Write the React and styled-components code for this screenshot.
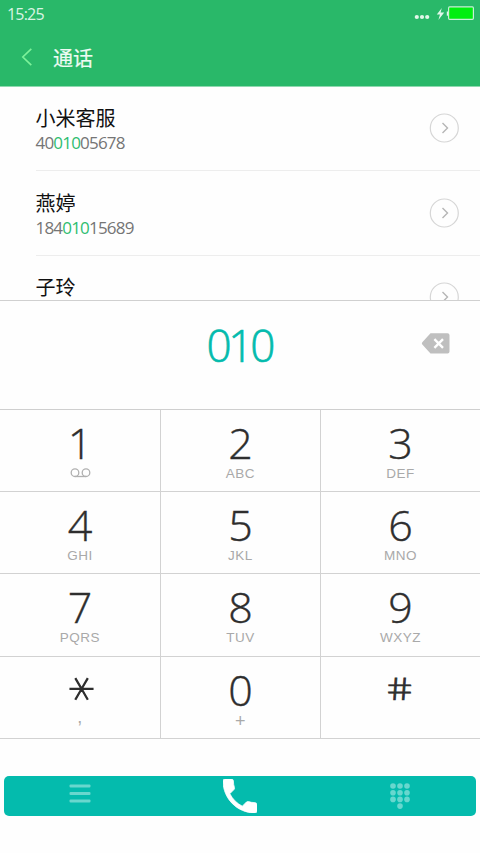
import styled, { createGlobalStyle } from "styled-components";

const GlobalStyle = createGlobalStyle`
  * {
    box-sizing: border-box;
  }
  body {
    margin: 0;
    background: #fff;
    font-family: "Open Sans", "Noto Sans CJK SC", sans-serif;
  }
`;

const Phone = styled.div`
  width: 480px;
  height: 853px;
  display: flex;
  flex-direction: column;
  overflow: hidden;
  background: #fefefe;
`;

const Header = styled.header`
  height: 87px;
  flex: none;
  background: #29b869;
  border-bottom: 1px solid #8fd9b0;
`;

const StatusBar = styled.div`
  height: 28px;
  padding: 0 5px 0 7px;
  display: flex;
  align-items: center;
  justify-content: space-between;
`;

const Clock = styled.span`
  font-size: 16px;
  line-height: 28px;
  letter-spacing: -0.8px;
  color: #d9f4e4;
`;

const TitleBar = styled.div`
  height: 58px;
  padding-left: 21px;
  display: flex;
  align-items: center;
`;

const Title = styled.h1`
  margin: 1px 0 0 21px;
  font: 400 20px/30px "Noto Sans CJK SC", sans-serif;
  -webkit-text-stroke: 0.2px;
  color: #eefbf3;
`;

const ContactList = styled.ul`
  margin: 0;
  padding: 0;
  height: 213px;
  flex: none;
  overflow: hidden;
  list-style: none;
`;

const ContactRow = styled.li`
  height: 84.4px;
  margin-left: 36px;
  padding: 17.4px 21px 0 0;
  display: flex;
  justify-content: space-between;
  border-bottom: 1px solid #ededed;
`;

const Name = styled.div`
  margin-left: -0.5px;
  font: 400 20px/28px "Noto Sans CJK SC", sans-serif;
  color: #111;
`;

const Number = styled.div`
  margin-left: -0.5px;
  font-size: 17px;
  line-height: 22px;
  letter-spacing: -0.8px;
  color: #757575;
`;

const Match = styled.span`
  color: #2fbd70;
`;

const DetailButton = styled.button`
  width: 30px;
  height: 30px;
  margin: 9px 0 0;
  padding: 0;
  border: none;
  background: none;
`;

const Display = styled.div`
  height: 109px;
  flex: none;
  display: grid;
  grid-template-columns: 1fr 1fr 1fr;
  border-top: 1px solid #d0d0d0;
`;

const Typed = styled.div`
  grid-column: 2;
  font-size: 44px;
  font-weight: 300;
  line-height: 60px;
  padding-top: 14px;
  letter-spacing: -3.2px;
  text-indent: -1.5px;
  text-align: center;
  -webkit-text-stroke: 0.7px;
  color: #04bbad;
`;

const Erase = styled.button`
  justify-self: end;
  align-self: start;
  width: 29px;
  height: 21px;
  margin: 32px 30px 0 0;
  padding: 0;
  border: none;
  background: none;
`;

const Keypad = styled.div`
  height: 330px;
  flex: none;
  display: grid;
  grid-template-columns: 161px 160px 159px;
  grid-template-rows: 82px 82px 83px 82px;
  border-top: 1px solid #cfcfcf;
`;

const Key = styled.button`
  display: flex;
  flex-direction: column;
  align-items: center;
  padding: 0;
  border: 0 solid #d2d2d2;
  border-right-width: ${(p) => (p.$last ? 0 : "1px")};
  border-bottom-width: 1px;
  background: none;
`;

const Digit = styled.span`
  height: 54px;
  font: 300 43px/66px "Open Sans", sans-serif;
  -webkit-text-stroke: 0.4px;
  color: #2e2e2e;
`;

const Star = styled(Digit)`
  font: 200 50px/54px "DejaVu Sans", sans-serif;
  -webkit-text-stroke: 1.1px;
  transform: translate(-8px, 5px) rotate(90deg);
`;

const Hash = styled(Digit)`
  font-size: 36px;
  line-height: 54px;
  -webkit-text-stroke: 0.8px;
  transform: translate(-1px, 5px) skewX(10deg) scale(1.1, 0.86);
`;

const Letters = styled.span`
  font: 400 ${(p) => (p.$mark ? 18 : 13.5)}px/20px "Liberation Sans", sans-serif;
  letter-spacing: 0.5px;
  color: #a9a9a9;
`;

// the pause mark hangs below the baseline, so it sits a little higher
const Pause = styled(Letters)`
  line-height: 13px;
`;

const BottomBar = styled.nav`
  height: 40px;
  margin: 37px 4px 0;
  flex: none;
  display: grid;
  grid-template-columns: 152px 168px 152px;
  justify-items: center;
  border-radius: 5px;
  background: #04bbad;
`;

const BarIcon = styled.svg`
  display: block;
  margin-top: ${(p) => p.$top}px;
`;

const contacts = [
  { name: "小米客服", number: "4001005678" },
  { name: "燕婷", number: "18401015689" },
  { name: "子玲" },
];

const keys = [
  ["1", "voicemail"],
  ["2", "ABC"],
  ["3", "DEF"],
  ["4", "GHI"],
  ["5", "JKL"],
  ["6", "MNO"],
  ["7", "PQRS"],
  ["8", "TUV"],
  ["9", "WXYZ"],
  ["*", ","],
  ["0", "+"],
  ["#", ""],
];

const faces = { "*": Star, "#": Hash };

const Voicemail = () => (
  <svg width="22" height="20" fill="none" stroke="#b0b0b0" strokeWidth="1.3">
    <circle cx="6" cy="8.7" r="3.8" />
    <circle cx="17" cy="8.7" r="3.8" />
    <path d="M6 12.5h11" />
  </svg>
);

const StatusIcons = () => (
  <svg width="62" height="28" viewBox="413 0 62 28">
    <g fill="#e2f7ea">
      <circle cx="416.8" cy="17" r="2.1" />
      <circle cx="422" cy="17" r="2.1" />
      <circle cx="427.2" cy="17" r="2.1" />
      <path d="M441.8 8l-5 6.4h3.2l-1.6 5.6 5.8-7.4h-3.6z" />
      <path d="M446.8 11.5h1.4v4.2h-1.4z" />
    </g>
    <rect
      x="448.6"
      y="6.9"
      width="24.8"
      height="12.4"
      rx="1"
      fill="#00ee10"
      stroke="#c6eed6"
      strokeWidth="1.2"
    />
  </svg>
);

const PhoneNumber = ({ number, typed }) => {
  const at = number.indexOf(typed);
  return (
    <Number>
      {number.slice(0, at)}
      <Match>{typed}</Match>
      {number.slice(at + typed.length)}
    </Number>
  );
};

const Contact = ({ name, number, typed }) => (
  <ContactRow>
    <div>
      <Name>{name}</Name>
      {number && <PhoneNumber number={number} typed={typed} />}
    </div>
    <DetailButton>
      <svg width="30" height="30" fill="none" strokeWidth="1.2">
        <circle cx="15.3" cy="15" r="14" stroke="#d6d6d6" />
        <path d="M13.5 10l5 5-5 5" stroke="#b5b5b5" strokeWidth="1.4" />
      </svg>
    </DetailButton>
  </ContactRow>
);

const App = () => {
  const typed = "010";

  return (
    <>
      <GlobalStyle />
      <Phone>
        <Header>
          <StatusBar>
            <Clock>15:25</Clock>
            <StatusIcons />
          </StatusBar>
          <TitleBar>
            <svg width="11" height="18" fill="none" stroke="#7df29a">
              <path d="M10.3 0.8L1.8 9l8.5 8.2" strokeWidth="1.6" />
            </svg>
            <Title>通话</Title>
          </TitleBar>
        </Header>
        <ContactList>
          {contacts.map((c) => (
            <Contact key={c.name} {...c} typed={typed} />
          ))}
        </ContactList>
        <Display>
          <Typed>{typed}</Typed>
          <Erase>
            <svg width="29" height="21" fill="none">
              <path
                d="M9.5 0.3H26.5a2 2 0 0 1 2 2V18.5a2 2 0 0 1-2 2H9.5L1.3 11.6q-1-1.2 0-2.4z"
                fill="#bfbfbf"
              />
              <path
                d="M13.4 6.2l8.6 8.6M22 6.2l-8.6 8.6"
                stroke="#fff"
                strokeWidth="2.4"
              />
            </svg>
          </Erase>
        </Display>
        <Keypad>
          {keys.map(([digit, letters], i) => {
            const Face = faces[digit] || Digit;
            const Sub = letters === "," ? Pause : Letters;
            return (
              <Key key={digit} $last={i % 3 === 2}>
                <Face>{digit}</Face>
                {letters === "voicemail" ? (
                  <Voicemail />
                ) : (
                  <Sub $mark={letters.length === 1}>{letters}</Sub>
                )}
              </Key>
            );
          })}
        </Keypad>
        <BottomBar>
          <BarIcon $top={8} width="22" height="20" fill="#68d7ce">
            <rect x="0.5" y="0.5" width="21" height="3" rx="1" />
            <rect x="0.5" y="8" width="21" height="3" rx="1" />
            <rect x="0.5" y="15.5" width="21" height="3" rx="1" />
          </BarIcon>
          <BarIcon $top={3} width="34" height="34" viewBox="3 3 18 18">
            <path
              d="M6.62 10.79c1.44 2.83 3.76 5.14 6.59 6.59l2.2-2.2c.27-.27.67-.36 1.02-.24 1.12.37 2.33.57 3.57.57.55 0 1 .45 1 1V20c0 .55-.45 1-1 1-9.39 0-17-7.61-17-17 0-.55.45-1 1-1h3.5c.55 0 1 .45 1 1 0 1.25.2 2.45.57 3.57.11.35.03.74-.25 1.02l-2.2 2.2z"
              fill="#fff"
              stroke="#fff"
              strokeWidth="0.4"
            />
          </BarIcon>
          <BarIcon $top={7} width="20" height="26" fill="#68d7ce">
            {[3, 9.8, 16.4].map((y) =>
              [3, 10, 17].map((x) => (
                <circle key={`${x}-${y}`} cx={x} cy={y} r="2.8" />
              ))
            )}
            <circle cx="10" cy="23.1" r="2.8" />
          </BarIcon>
        </BottomBar>
      </Phone>
    </>
  );
};

export default App;
